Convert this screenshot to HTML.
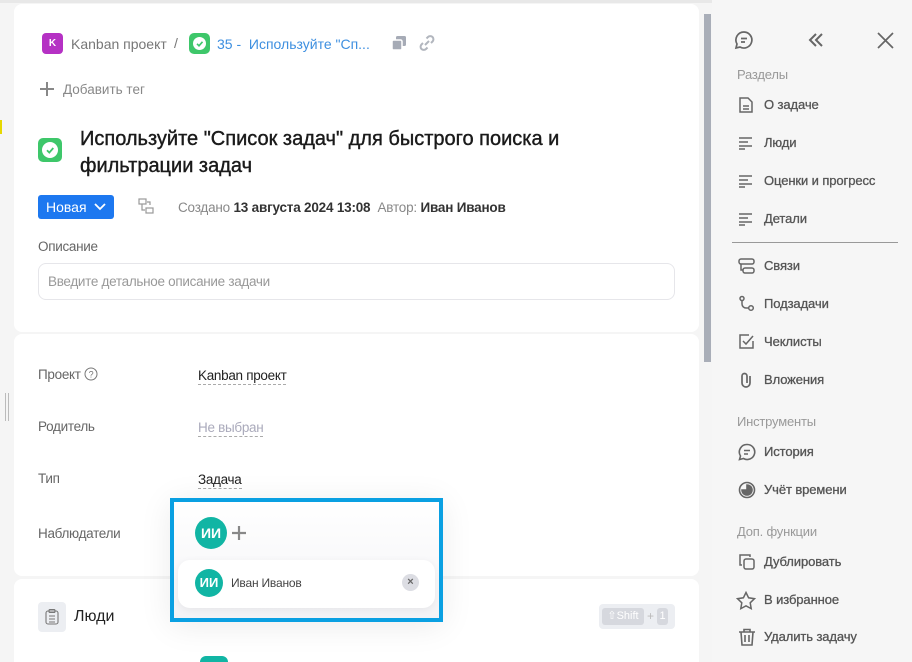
<!DOCTYPE html>
<html style="width:912px;height:662px;overflow:hidden"><head><meta charset="utf-8"><style>
*{box-sizing:border-box;margin:0;padding:0}
body{width:912px;height:662px;overflow:hidden;background:#f5f5f5;font-family:"Liberation Sans",sans-serif;position:relative;color:#222}
.card{position:absolute;left:14px;width:685px;background:#fff;border-radius:8px}
.abs{position:absolute;white-space:nowrap}
.lbl{font-size:13.5px;color:#666;letter-spacing:-0.3px}
.val{font-size:13.5px;color:#222;letter-spacing:-0.3px;border-bottom:1px dashed #aaa;padding-bottom:1px}
.side{position:absolute;left:712px;top:0;width:200px;height:662px;background:#f6f6f6}
.si{position:absolute;left:26px;font-size:13px;color:#555;letter-spacing:-0.1px;white-space:nowrap;-webkit-text-stroke:0.3px #555}
.si svg{position:absolute;left:0;top:-1px}
.si span{position:absolute;left:26px;top:0}
.sh{position:absolute;left:25px;font-size:13px;color:#999;letter-spacing:-0.2px}
</style></head><body>
<div style="position:absolute;left:0;top:0;width:912px;height:3px;background:#e8e8e8"></div>
<div style="position:absolute;left:0;top:120px;width:2px;height:14px;background:#e6d800"></div>
<div style="position:absolute;left:5px;top:393px;height:28px;border-left:1px solid #bbb;border-right:1px solid #bbb;width:4px"></div>

<div class="card" style="top:4px;height:328px"></div>
<div class="card" style="top:334px;height:242px"></div>
<div class="card" style="top:579px;height:83px;border-radius:8px 8px 0 0"></div>

<div class="abs" style="left:42px;top:33px;width:21px;height:21px;background:#b531c4;border-radius:4px;color:#fff;font-size:10px;font-weight:bold;text-align:center;line-height:21px">K</div>
<div class="abs" style="left:71px;top:36px;font-size:14px;color:#777">Kanban проект</div>
<div class="abs" style="left:174px;top:35px;font-size:14px;color:#777">/</div>
<div class="abs" style="left:189px;top:33px;width:21px;height:21px;background:#3ec76a;border-radius:5px"><div style="position:absolute;left:4px;top:4px;width:13px;height:13px;background:#fff;border-radius:50%"></div><svg style="position:absolute;left:4px;top:4px" width="13" height="13"><path d="M4 6.8l2 2 3.5-4" stroke="#3ec76a" stroke-width="1.6" fill="none"/></svg></div>
<div class="abs" style="left:217px;top:36px;font-size:14px;color:#3d8fe0">35 - &nbsp;Используйте "Сп...</div>
<svg class="abs" style="left:390px;top:34px" width="18" height="18"><rect x="6" y="2" width="10" height="10" rx="1.5" fill="#a6abb6"/><rect x="2" y="6" width="10" height="10" rx="1.5" fill="#a6abb6" stroke="#fff" stroke-width="1.5"/></svg>
<svg class="abs" style="left:417px;top:33px" width="20" height="20" fill="none" stroke="#b2b6be" stroke-width="2"><path d="M8 12l4-4M9.5 5.5l1.5-1.5a3 3 0 0 1 4.5 4.5L14 10M10.5 14.5L9 16a3 3 0 0 1-4.5-4.5L6 10"/></svg>
<svg class="abs" style="left:39px;top:81px" width="16" height="16" stroke="#888" stroke-width="2"><path d="M8 1v14M1 8h14"/></svg>
<div class="abs" style="left:63px;top:82px;font-size:13.5px;color:#888">Добавить тег</div>

<div class="abs" style="left:38px;top:138px;width:24px;height:24px;background:#3ec76a;border-radius:5px"><div style="position:absolute;left:4px;top:4px;width:16px;height:16px;background:#fff;border-radius:50%"></div><svg style="position:absolute;left:4px;top:4px" width="16" height="16"><path d="M5 8.3l2.3 2.3 4-4.6" stroke="#3ec76a" stroke-width="1.8" fill="none"/></svg></div>
<div class="abs" style="left:80px;top:126px;font-size:20px;line-height:27px;color:#1a1a1a;white-space:normal;width:560px;-webkit-text-stroke:0.4px #1a1a1a">Используйте "Список задач" для быстрого поиска и фильтрации задач</div>

<div class="abs" style="left:38px;top:195px;width:76px;height:24px;background:#1d78f0;border-radius:3px;color:#fff;font-size:14px;line-height:24px;padding-left:8px">Новая<svg style="position:absolute;left:56px;top:8px" width="12" height="8"><path d="M1 1l5 5 5-5" stroke="#fff" stroke-width="1.8" fill="none"/></svg></div>
<svg class="abs" style="left:138px;top:198px" width="17" height="17" fill="none" stroke="#999" stroke-width="1.2"><rect x="1" y="1" width="7" height="5"/><rect x="8" y="10" width="7" height="5"/><path d="M4 6v6h3M12 7V4H9"/></svg>
<div class="abs" style="left:178px;top:200px;font-size:13.5px;color:#888;letter-spacing:-0.2px">Создано <b style="color:#333">13 августа 2024 13:08</b>&nbsp; Автор: <b style="color:#333">Иван Иванов</b></div>

<div class="abs lbl" style="left:38px;top:239px">Описание</div>
<div class="abs" style="left:38px;top:263px;width:637px;height:37px;border:1px solid #e6e6ea;border-radius:8px;font-size:13.5px;color:#999;line-height:36px;padding-left:9px;letter-spacing:-0.3px">Введите детальное описание задачи</div>

<div class="abs lbl" style="left:38px;top:367px">Проект <svg style="vertical-align:-2px" width="14" height="14" fill="none" stroke="#777"><circle cx="7" cy="7" r="6"/><text x="7" y="10.5" font-size="9" text-anchor="middle" fill="#777" stroke="none" font-family="Liberation Sans">?</text></svg></div>
<div class="abs val" style="left:198px;top:368px">Kanban проект</div>
<div class="abs lbl" style="left:38px;top:419px">Родитель</div>
<div class="abs val" style="left:198px;top:420px;color:#aab">Не выбран</div>
<div class="abs lbl" style="left:38px;top:471px">Тип</div>
<div class="abs val" style="left:198px;top:472px">Задача</div>
<div class="abs lbl" style="left:38px;top:526px">Наблюдатели</div>

<div class="abs" style="left:170px;top:498px;width:273px;height:124px;border:4px solid #0aa0e2;background:#fff;box-shadow:0 4px 30px rgba(0,0,0,0.08)"></div>
<div class="abs" style="left:174px;top:502px;width:265px;height:116px;background:linear-gradient(#fff,#f3f3f6)"></div>
<div class="abs" style="left:195px;top:517px;width:32px;height:32px;border-radius:50%;background:#11b5a4;color:#fff;font-weight:bold;font-size:14px;text-align:center;line-height:32px">ИИ</div>
<svg class="abs" style="left:231px;top:525px" width="16" height="16" stroke="#888" stroke-width="2.2"><path d="M8 1v14M1 8h14"/></svg>
<div class="abs" style="left:178px;top:560px;width:257px;height:48px;background:#fff;border-radius:12px;box-shadow:0 2px 8px rgba(0,0,0,0.06)"></div>
<div class="abs" style="left:195px;top:569px;width:28px;height:28px;border-radius:50%;background:#11b5a4;color:#fff;font-weight:bold;font-size:13px;text-align:center;line-height:28px">ИИ</div>
<div class="abs" style="left:231px;top:576px;font-size:12px;color:#444;letter-spacing:-0.2px">Иван Иванов</div>
<div class="abs" style="left:402px;top:574px;width:17px;height:17px;border-radius:50%;background:#dcdde3;color:#666;font-size:11px;text-align:center;line-height:17px;font-weight:bold">×</div>

<div class="abs" style="left:38px;top:602px;width:28px;height:30px;border-radius:4px;background:#eceef2"><svg style="position:absolute;left:7px;top:7px" width="14" height="16" fill="none" stroke="#777" stroke-width="1.1"><rect x="1" y="2" width="12" height="13" rx="2"/><rect x="4" y="0.5" width="6" height="3" rx="1"/><path d="M4 7h6M4 10h6M4 13h6"/></svg></div>
<div class="abs" style="left:74px;top:608px;font-size:16px;color:#222">Люди</div>
<div class="abs" style="left:599px;top:604px;width:76px;height:25px;border-radius:4px;background:#eceef2"></div>
<div class="abs" style="left:602px;top:608px;width:42px;height:17px;border-radius:3px;background:#d6d8de;color:#fff;font-size:11px;line-height:17px;text-align:center">⇧Shift</div>
<div class="abs" style="left:647px;top:609px;font-size:12px;color:#bbb">+</div>
<div class="abs" style="left:657px;top:608px;width:11px;height:17px;border-radius:3px;background:#d6d8de;color:#fff;font-size:11px;line-height:17px;text-align:center">1</div>
<div class="abs" style="left:200px;top:656px;width:28px;height:6px;border-radius:14px 14px 0 0;background:#11b5a4"></div>

<div class="abs" style="left:704px;top:14px;width:7px;height:348px;background:#a9aeb8"></div>

<div class="side">
<svg class="abs" style="left:22px;top:30px" width="20" height="20" fill="none" stroke="#666" stroke-width="1.7"><path d="M10 2a8 8 0 1 1-4 15L2 18l1-4A8 8 0 0 1 10 2z"/><path d="M7 8.5h6M7 12h4"/></svg>
<svg class="abs" style="left:95px;top:31px" width="18" height="18" fill="none" stroke="#666" stroke-width="2"><path d="M9 3L3 9l6 6M15 3L9 9l6 6"/></svg>
<svg class="abs" style="left:165px;top:32px" width="17" height="17" stroke="#666" stroke-width="1.7"><path d="M1 1l15 15M16 1L1 16"/></svg>
<div class="sh" style="top:67px">Разделы</div>
<div class="si" style="top:97px"><svg width="16" height="18" fill="none" stroke="#666" stroke-width="1.5"><path d="M2 2h8l4 4v10H2z"/><path d="M5 10h6M5 13h6"/></svg><span>О задаче</span></div>
<div class="si" style="top:135px"><svg width="16" height="18" stroke="#666" stroke-width="1.5"><path d="M1 4h13M1 8h9M1 12h13M1 15h6"/></svg><span>Люди</span></div>
<div class="si" style="top:173px"><svg width="16" height="18" stroke="#666" stroke-width="1.5"><path d="M1 4h13M1 8h9M1 12h13M1 15h6"/></svg><span>Оценки и прогресс</span></div>
<div class="si" style="top:211px"><svg width="16" height="18" stroke="#666" stroke-width="1.5"><path d="M1 4h13M1 8h9M1 12h13M1 15h6"/></svg><span>Детали</span></div>
<div style="position:absolute;left:20px;top:242px;width:166px;height:1px;background:#999"></div>
<div class="si" style="top:258px"><svg width="18" height="18" fill="none" stroke="#666" stroke-width="1.5"><rect x="1" y="2" width="15" height="5" rx="2"/><rect x="5" y="11" width="11" height="5" rx="2"/><path d="M3 7v6h2"/></svg><span>Связи</span></div>
<div class="si" style="top:296px"><svg width="18" height="18" fill="none" stroke="#666" stroke-width="1.5"><circle cx="4" cy="3.5" r="2"/><circle cx="13" cy="13" r="2.3"/><path d="M4 6v3a4 4 0 0 0 4 4h2.5"/></svg><span>Подзадачи</span></div>
<div class="si" style="top:334px"><svg width="18" height="18" fill="none" stroke="#666" stroke-width="1.5"><path d="M15 8v7H2V2h9"/><path d="M5 8l3 3 7-8"/></svg><span>Чеклисты</span></div>
<div class="si" style="top:372px"><svg width="18" height="18" fill="none" stroke="#666" stroke-width="1.7"><path d="M12 5v7a4 4 0 0 1-8 0V5a2.5 2.5 0 0 1 5 0v7"/></svg><span>Вложения</span></div>
<div class="sh" style="top:414px">Инструменты</div>
<div class="si" style="top:444px"><svg width="18" height="18" fill="none" stroke="#666" stroke-width="1.6"><path d="M9 1.5a7.5 7.5 0 1 1-3.5 14L1.5 16.5l1-3.5A7.5 7.5 0 0 1 9 1.5z"/><path d="M6 7.5h6M6 11h4"/></svg><span>История</span></div>
<div class="si" style="top:482px"><svg width="18" height="18" fill="none" stroke="#666" stroke-width="1.6"><circle cx="9" cy="9" r="7.5"/><path d="M9 4a5 5 0 1 1-5 5h5z" fill="#666"/></svg><span>Учёт времени</span></div>
<div class="sh" style="top:524px">Доп. функции</div>
<div class="si" style="top:554px"><svg width="18" height="18" fill="none" stroke="#666" stroke-width="1.5"><path d="M4 12H2V2h10v2"/><rect x="6" y="6" width="10" height="10" rx="2"/></svg><span>Дублировать</span></div>
<div class="si" style="top:592px;left:24px"><svg width="20" height="20" fill="none" stroke="#666" stroke-width="1.5"><path d="M10 1.5l2.6 5.3 5.9.9-4.3 4.1 1 5.8L10 14.8l-5.2 2.8 1-5.8L1.5 7.7l5.9-.9z"/></svg><span style="left:28px">В избранное</span></div>
<div class="si" style="top:629px"><svg width="18" height="18" fill="none" stroke="#666" stroke-width="1.6"><path d="M1 4h16M6 4V1.5h6V4M3 4l1 13h10l1-13M7 7v7M11 7v7"/></svg><span>Удалить задачу</span></div>
</div>
</body></html>
